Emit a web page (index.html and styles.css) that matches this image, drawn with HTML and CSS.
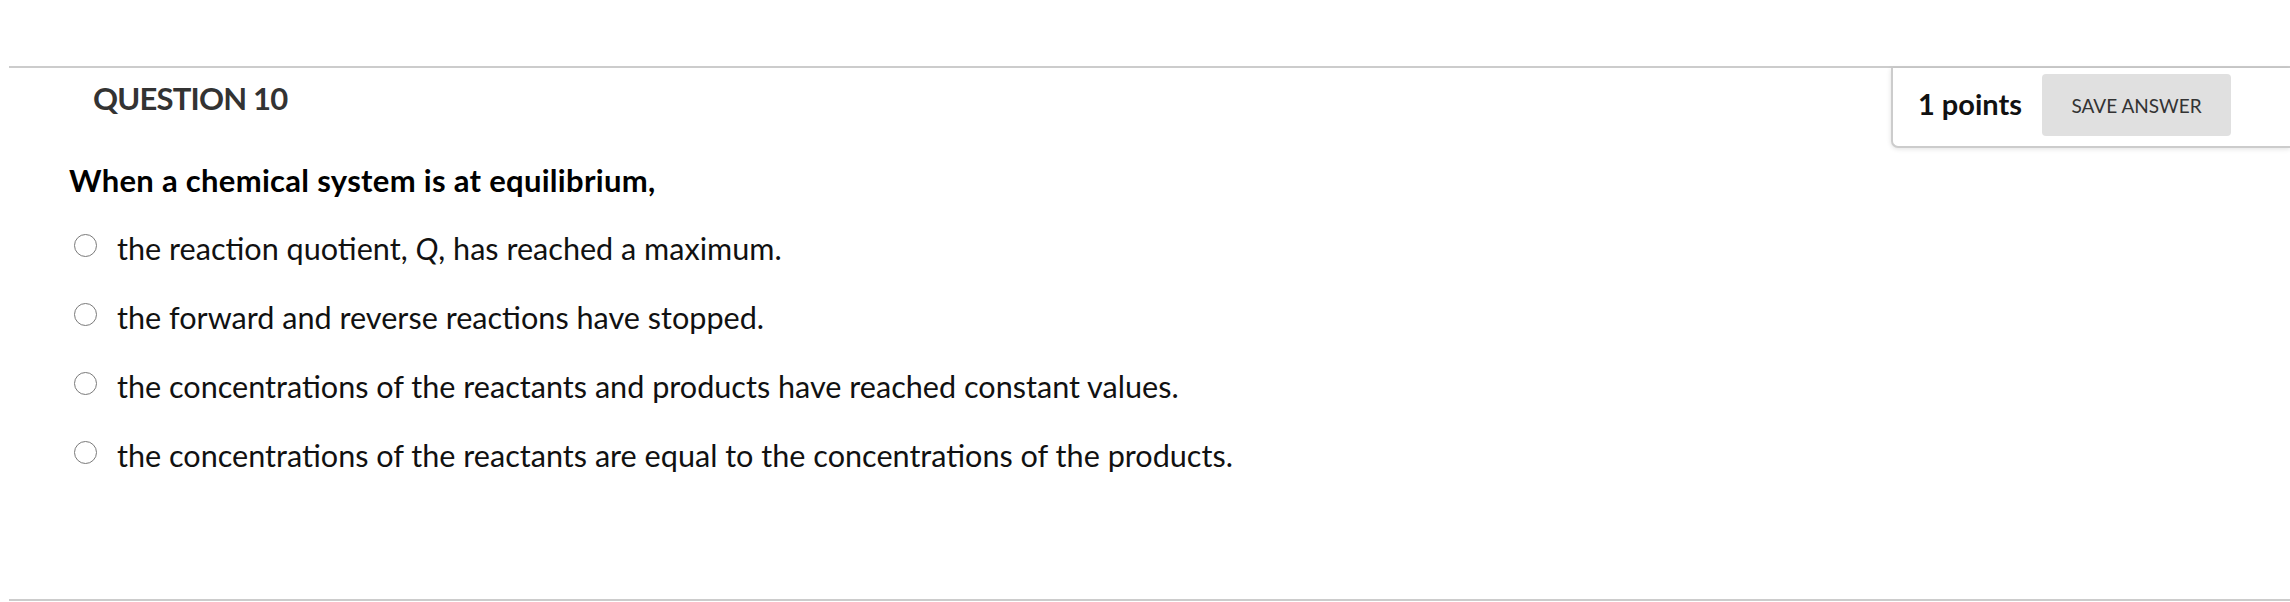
FILE: index.html
```html
<!DOCTYPE html>
<html lang="en">
<head>
<meta charset="utf-8">
<title>Question 10</title>
<link rel="stylesheet" href="styles.css">
</head>
<body>
<section class="question">
  <header class="q-head">
    <h2 class="q-title">QUESTION 10</h2>
    <div class="points-box">
      <span class="points">1 points</span>
      <button class="save-btn" type="button">SAVE ANSWER</button>
    </div>
  </header>
  <div class="q-body">
    <p class="q-text">When a chemical system is at equilibrium,</p>
    <ul class="options">
      <li class="option"><span class="radio"></span><span class="opt-text">the reaction quotient, <i>Q</i>, has reached a maximum.</span></li>
      <li class="option"><span class="radio"></span><span class="opt-text">the forward and reverse reactions have stopped.</span></li>
      <li class="option"><span class="radio"></span><span class="opt-text">the concentrations of the reactants and products have reached constant values.</span></li>
      <li class="option"><span class="radio"></span><span class="opt-text">the concentrations of the reactants are equal to the concentrations of the products.</span></li>
    </ul>
  </div>
</section>
</body>
</html>
```
FILE: styles.css
```css
html, body {
  margin: 0;
  padding: 0;
  background: #fff;
}
body {
  font-family: Lato, "Open Sans", sans-serif;
  color: #111;
}
.question {
  margin: 66px 0 0 9px;
  border-top: 2px solid #ccc;
  border-bottom: 2px solid #ccc;
  height: 531px;
  box-sizing: content-box;
}
.q-head {
  display: flex;
  align-items: flex-start;
}
.q-title {
  margin: 15px 0 0 84px;
  font-size: 31px;
  line-height: 1;
  font-weight: 700;
  color: #333;
  letter-spacing: -0.8px;
}
.points-box {
  margin-left: auto;
  display: flex;
  align-items: center;
  gap: 20px;
  height: 62px;
  padding: 6px 59px 10px 25px;
  border-left: 2px solid #ccc;
  border-bottom: 2px solid #ccc;
  border-bottom-left-radius: 7px;
  box-shadow: 0 1px 5px rgba(0, 0, 0, 0.12);
  background: #fff;
}
.points {
  font-size: 29px;
  font-weight: 700;
  color: #111;
  margin-top: -4px;
}
.save-btn {
  width: 189px;
  height: 62px;
  border: none;
  border-radius: 4px;
  background: #e0e0e0;
  color: #333;
  font-family: Lato, "Open Sans", sans-serif;
  font-size: 19px;
  padding: 0;
}
.q-body {
  padding-left: 60px;
}
.q-text {
  margin: 12px 0 0 0;
  font-size: 31px;
  letter-spacing: 0.3px;
  line-height: 40px;
  font-weight: 700;
  color: #000;
}
.options {
  list-style: none;
  margin: 29px 0 0 5px;
  padding: 0;
  display: flex;
  flex-direction: column;
  gap: 29px;
}
.option {
  display: flex;
  align-items: center;
  gap: 20px;
  height: 40px;
}
.radio {
  width: 21px;
  height: 21px;
  border: 1.5px solid #7a7a7a;
  border-radius: 50%;
  flex: none;
  margin-top: -8px;
}
.opt-text {
  font-size: 30.6px;
  line-height: 40px;
  color: #111;
}
```
